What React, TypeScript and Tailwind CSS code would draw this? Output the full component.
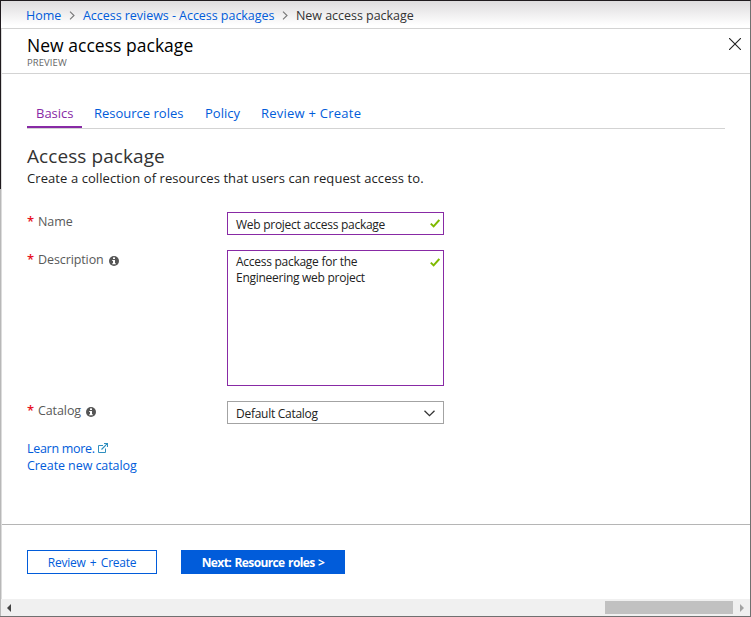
import React from "react";

function Check() {
  return (
    <svg width="10" height="9" viewBox="0 0 10 9" fill="none" className="shrink-0">
      <path d="M0.8 4.6 L3.6 7.4 L9.3 1" stroke="#7fba00" strokeWidth="2" />
    </svg>
  );
}

function Info() {
  return (
    <svg width="10" height="10" viewBox="0 0 10 10" className="mt-[2px] ml-[5px] shrink-0">
      <circle cx="5" cy="5" r="5" fill="#555" />
      <rect x="4" y="1.4" width="2" height="1.6" fill="#fff" />
      <path d="M3.2 4H6V7.2H6.8V8.2H3.2V7.2H4V5H3.2Z" fill="#fff" />
    </svg>
  );
}

function Chevron() {
  return (
    <svg width="6" height="9" viewBox="0 0 6 9" fill="none" className="shrink-0">
      <path d="M1 0.7 L5 4.5 L1 8.3" stroke="#777" strokeWidth="1.1" />
    </svg>
  );
}

function Label({ children, info }: { children: React.ReactNode; info?: boolean }) {
  return (
    <div className="flex h-5 w-[200px] items-center text-[12.5px] tracking-[-0.1px] text-[#595959]">
      <span className="w-[11px] text-[13px] font-semibold text-[#e81123]">*</span>
      {children}
      {info && <Info />}
    </div>
  );
}

export default function App() {
  return (
    <div className="flex h-[617px] w-[751px] flex-col overflow-hidden border-t border-r border-b border-t-[#1f1a1e] border-r-[#707070] border-b-[#707070] bg-white font-['Open_Sans','Noto_Sans',sans-serif] whitespace-nowrap">
      <div className="flex min-h-0 flex-1">
        <div className="flex w-px shrink-0 flex-col bg-[#b8b8b8]">
          <div className="h-[188px] bg-[#1f1a1e]" />
        </div>
        <div className="flex min-w-0 flex-1 flex-col">
          <nav className="flex h-7 items-center border-b border-[#d3d3d3] bg-linear-to-b from-[#dedcde] to-white to-90% pt-[2px] pl-[25px] text-[12.5px] leading-[18px] tracking-[-0.04px] text-[#015cda]">
            <span className="w-[43px] pt-px">Home</span>
            <Chevron />
            <span className="ml-2 w-[199px] pt-px">Access reviews - Access packages</span>
            <Chevron />
            <span className="ml-2 pt-px text-[#333]">New access package</span>
          </nav>
          <div className="flex flex-1 flex-col border-l border-[#dcdcdc]">
            <header className="flex h-[45px] justify-between border-b border-[#d3d3d3] pl-[25px]">
              <div>
                <h1 className="mt-[5px] h-[22px] text-[17.5px] leading-[22px] font-medium tracking-[0.03px] text-black">New access package</h1>
                <p className="h-[14px] text-[9.5px] leading-[14px] tracking-[0.08px] text-[#666]">PREVIEW</p>
              </div>
              <svg width="12" height="12" viewBox="0 0 12 12" className="mt-[9px] mr-[9px]">
                <path d="M0 0 L12 12 M12 0 L0 12" stroke="#222" strokeWidth="1.1" />
              </svg>
            </header>
            <main className="flex h-[450px] flex-col pl-[25px]">
              <div className="mt-[29px] flex h-[26px] w-[698px] border-b border-[#d3d3d3] text-[13px] leading-[21px] text-[#015cda]">
                <div className="h-[25px] w-[55px] border-b-2 border-[#882aa5] pl-[9px] text-[#882aa5]">Basics</div>
                <div className="ml-3 w-[111px]">Resource roles</div>
                <div className="w-[56px]">Policy</div>
                <div className="tracking-[0.24px]">Review + Create</div>
              </div>
              <h2 className="mt-[13px] h-7 text-[19px] leading-7 tracking-[0.08px] text-[#333]">Access package</h2>
              <p className="h-4 text-[13px] leading-4 tracking-[0.08px] text-[#222]">Create a collection of resources that users can request access to.</p>
              <div className="mt-[26px] flex h-[23px]">
                <Label>Name</Label>
                <div className="flex h-[23px] w-[217px] items-center justify-between border border-[#882aa5] pr-[3px] pl-2 text-[12px] tracking-[-0.27px] text-[#222]">
                  <span className="pt-[2px]">Web project access package</span>
                  <Check />
                </div>
              </div>
              <div className="mt-[15px] flex h-[136px]">
                <Label info>Description</Label>
                <div className="flex h-[136px] w-[217px] justify-between border border-[#882aa5] pt-[3px] pr-[3px] pl-2 text-[12px] leading-4 tracking-[-0.27px] text-[#222]">
                  <span>Access package for the<br />Engineering web project</span>
                  <span className="pt-1"><Check /></span>
                </div>
              </div>
              <div className="mt-[15px] flex h-[23px]">
                <Label info>Catalog</Label>
                <div className="flex h-[23px] w-[217px] items-center justify-between border border-[#a3a3a3] pr-2 pl-2 text-[12px] tracking-[-0.27px] text-[#222]">
                  <span className="pt-[2px]">Default Catalog</span>
                  <svg width="11" height="7" viewBox="0 0 11 7" fill="none" className="mt-px">
                    <path d="M0.5 0.7 L5.5 5.7 L10.5 0.7" stroke="#333" strokeWidth="1.3" />
                  </svg>
                </div>
              </div>
              <div className="mt-4 text-[12.5px] leading-[17px] tracking-[-0.08px] text-[#015cda]">
                <div className="flex items-center">
                  <span className="w-[71px] tracking-[-0.3px]">Learn more.</span>
                  <svg width="10" height="10" viewBox="0 0 10 10" fill="none" stroke="#2f8fbf" className="mb-px">
                    <path d="M5 2.5H0.5V9.5H7.5V5.5" />
                    <path d="M6 0.5H9.5V4M9.3 0.7L3.5 6.5" strokeWidth="1.2" />
                  </svg>
                </div>
                <div>Create new catalog</div>
              </div>
            </main>
            <footer className="flex flex-1 gap-6 border-t border-[#b5b5b5] pt-[25px] pl-[25px] text-[12px]">
              <button className="h-6 w-[130px] border border-[#015cda] pt-px font-medium tracking-[-0.25px] text-[#015cda] [word-spacing:1.5px]">Review + Create</button>
              <button className="h-6 w-[164px] bg-[#015cda] pt-px font-bold tracking-[-0.62px] text-white [word-spacing:1px]">Next: Resource roles &gt;</button>
            </footer>
          </div>
          <div className="flex h-[17px] items-center justify-between bg-[#f0f0f0] pr-[6px] pl-[6px]">
            <svg width="4" height="8" viewBox="0 0 4 8"><path d="M4 0V8L0 4Z" fill="#444" /></svg>
            <div className="flex items-center gap-[7px]">
              <div className="h-[13px] w-32 bg-[#c1c1c1]" />
              <svg width="4" height="8" viewBox="0 0 4 8"><path d="M0 0V8L4 4Z" fill="#a3a3a3" /></svg>
            </div>
          </div>
        </div>
      </div>
    </div>
  );
}
